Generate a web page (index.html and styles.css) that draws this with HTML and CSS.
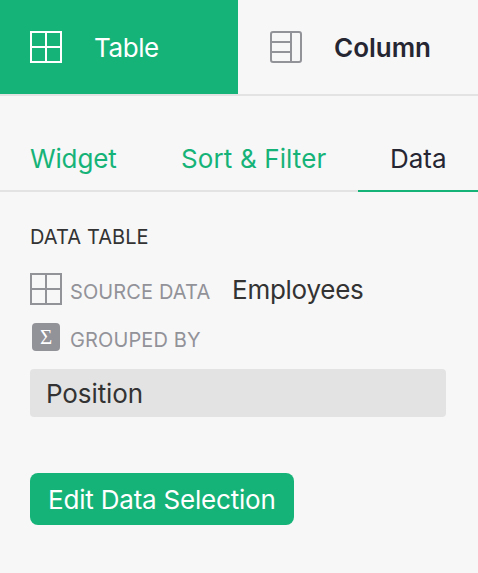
FILE: index.html
```html
<!DOCTYPE html>
<html lang="en">
<head>
<meta charset="utf-8">
<title>Table options</title>
<link rel="stylesheet" href="styles.css">
</head>
<body>
<nav class="top">
  <div class="top-tab active">
    <svg class="icon" viewBox="0 0 32 32"><path d="M1 1h30v30H1zM16 1v30M1 16h30"/></svg>
    <span class="t-table">Table</span>
  </div>
  <div class="top-tab column">
    <svg class="icon" viewBox="0 0 32 32"><rect x="1" y="1" width="30" height="30" rx="2"/><path d="M21 1v30M1 11h20M1 21h20"/></svg>
    <span class="t-column">Column</span>
  </div>
</nav>
<nav class="subtabs">
  <div class="sub widget"><span>Widget</span></div>
  <div class="sub sort"><span>Sort &amp; Filter</span></div>
  <div class="sub data"><span>Data</span></div>
</nav>
<main>
  <h2><span>DATA TABLE</span></h2>
  <div class="row source">
    <svg class="icon" viewBox="0 0 32 32"><path d="M1 1h30v30H1zM16 1v30M1 16h30"/></svg>
    <span class="label l-source">SOURCE DATA</span>
    <span class="value">Employees</span>
  </div>
  <div class="row grouped">
    <span class="sigma">Σ</span>
    <span class="label l-group">GROUPED BY</span>
  </div>
  <div class="field"><span>Position</span></div>
  <button type="button"><span>Edit Data Selection</span></button>
</main>
</body>
</html>
```
FILE: styles.css
```css
* { box-sizing: border-box; }
body { margin: 0; height: 573px; overflow: hidden; background: #f7f7f7; color: #262633; font: 26px/32px Inter, sans-serif; }
.top { display: flex; height: 96px; border-bottom: 2px solid #e3e3e3; }
.top-tab { display: flex; align-items: center; width: 238px; padding-left: 30px; color: #929299; }
.column { width: 240px; padding-left: 32px; }
.active { background: #16b378; color: #fff; }
.icon { width: 32px; height: 32px; flex: none; fill: none; stroke: currentColor; stroke-width: 2; }
.top-tab span { margin-left: 32px; padding-top: 2px; }
.top-tab .t-table { letter-spacing: -.4px; }
.top-tab .t-column { color: #262633; font-weight: 600; }
.subtabs { display: flex; height: 96px; color: #16b378; border-bottom: 2px solid #e3e3e3; white-space: nowrap; }
.sub { height: 96px; padding-top: 47px; }
.widget { width: 149px; padding-left: 30px; letter-spacing: -.15px; }
.sort { width: 209px; padding-left: 32px; letter-spacing: .12px; }
.data { width: 120px; padding-left: 32px; color: #262633; border-bottom: 2px solid #16b378; }
main { padding: 35px 32px 0 30px; color: #333; }
h2 { margin: 0; font-size: 20px; line-height: 20px; font-weight: 400; letter-spacing: .08px; }
.row { display: flex; color: #929299; white-space: nowrap; }
.source { margin-top: 26px; height: 32px; }
.grouped { margin-top: 18px; height: 28px; }
.label { font-size: 20px; line-height: 20px; margin-left: 8px; padding-top: 9px; width: 162px; letter-spacing: .12px; }
.value { color: #333; padding-top: 1px; letter-spacing: -.25px; }
.sigma { width: 28px; height: 28px; margin-left: 2px; border-radius: 4px; background: #929299; color: #fff; font: 21px/28px "Liberation Serif", serif; text-align: center; }
.grouped .label { margin-left: 10px; padding-top: 7px; }
.field { height: 48px; margin-top: 18px; padding: 9px 16px; border-radius: 4px; background: #e3e3e3; letter-spacing: -.1px; }
button { display: block; width: 264px; height: 52px; margin-top: 56px; padding: 2px 0 0 18px; border: 0; border-radius: 8px; background: #16b378; color: #fff; font: inherit; letter-spacing: -.2px; text-align: left; white-space: nowrap; }
```
